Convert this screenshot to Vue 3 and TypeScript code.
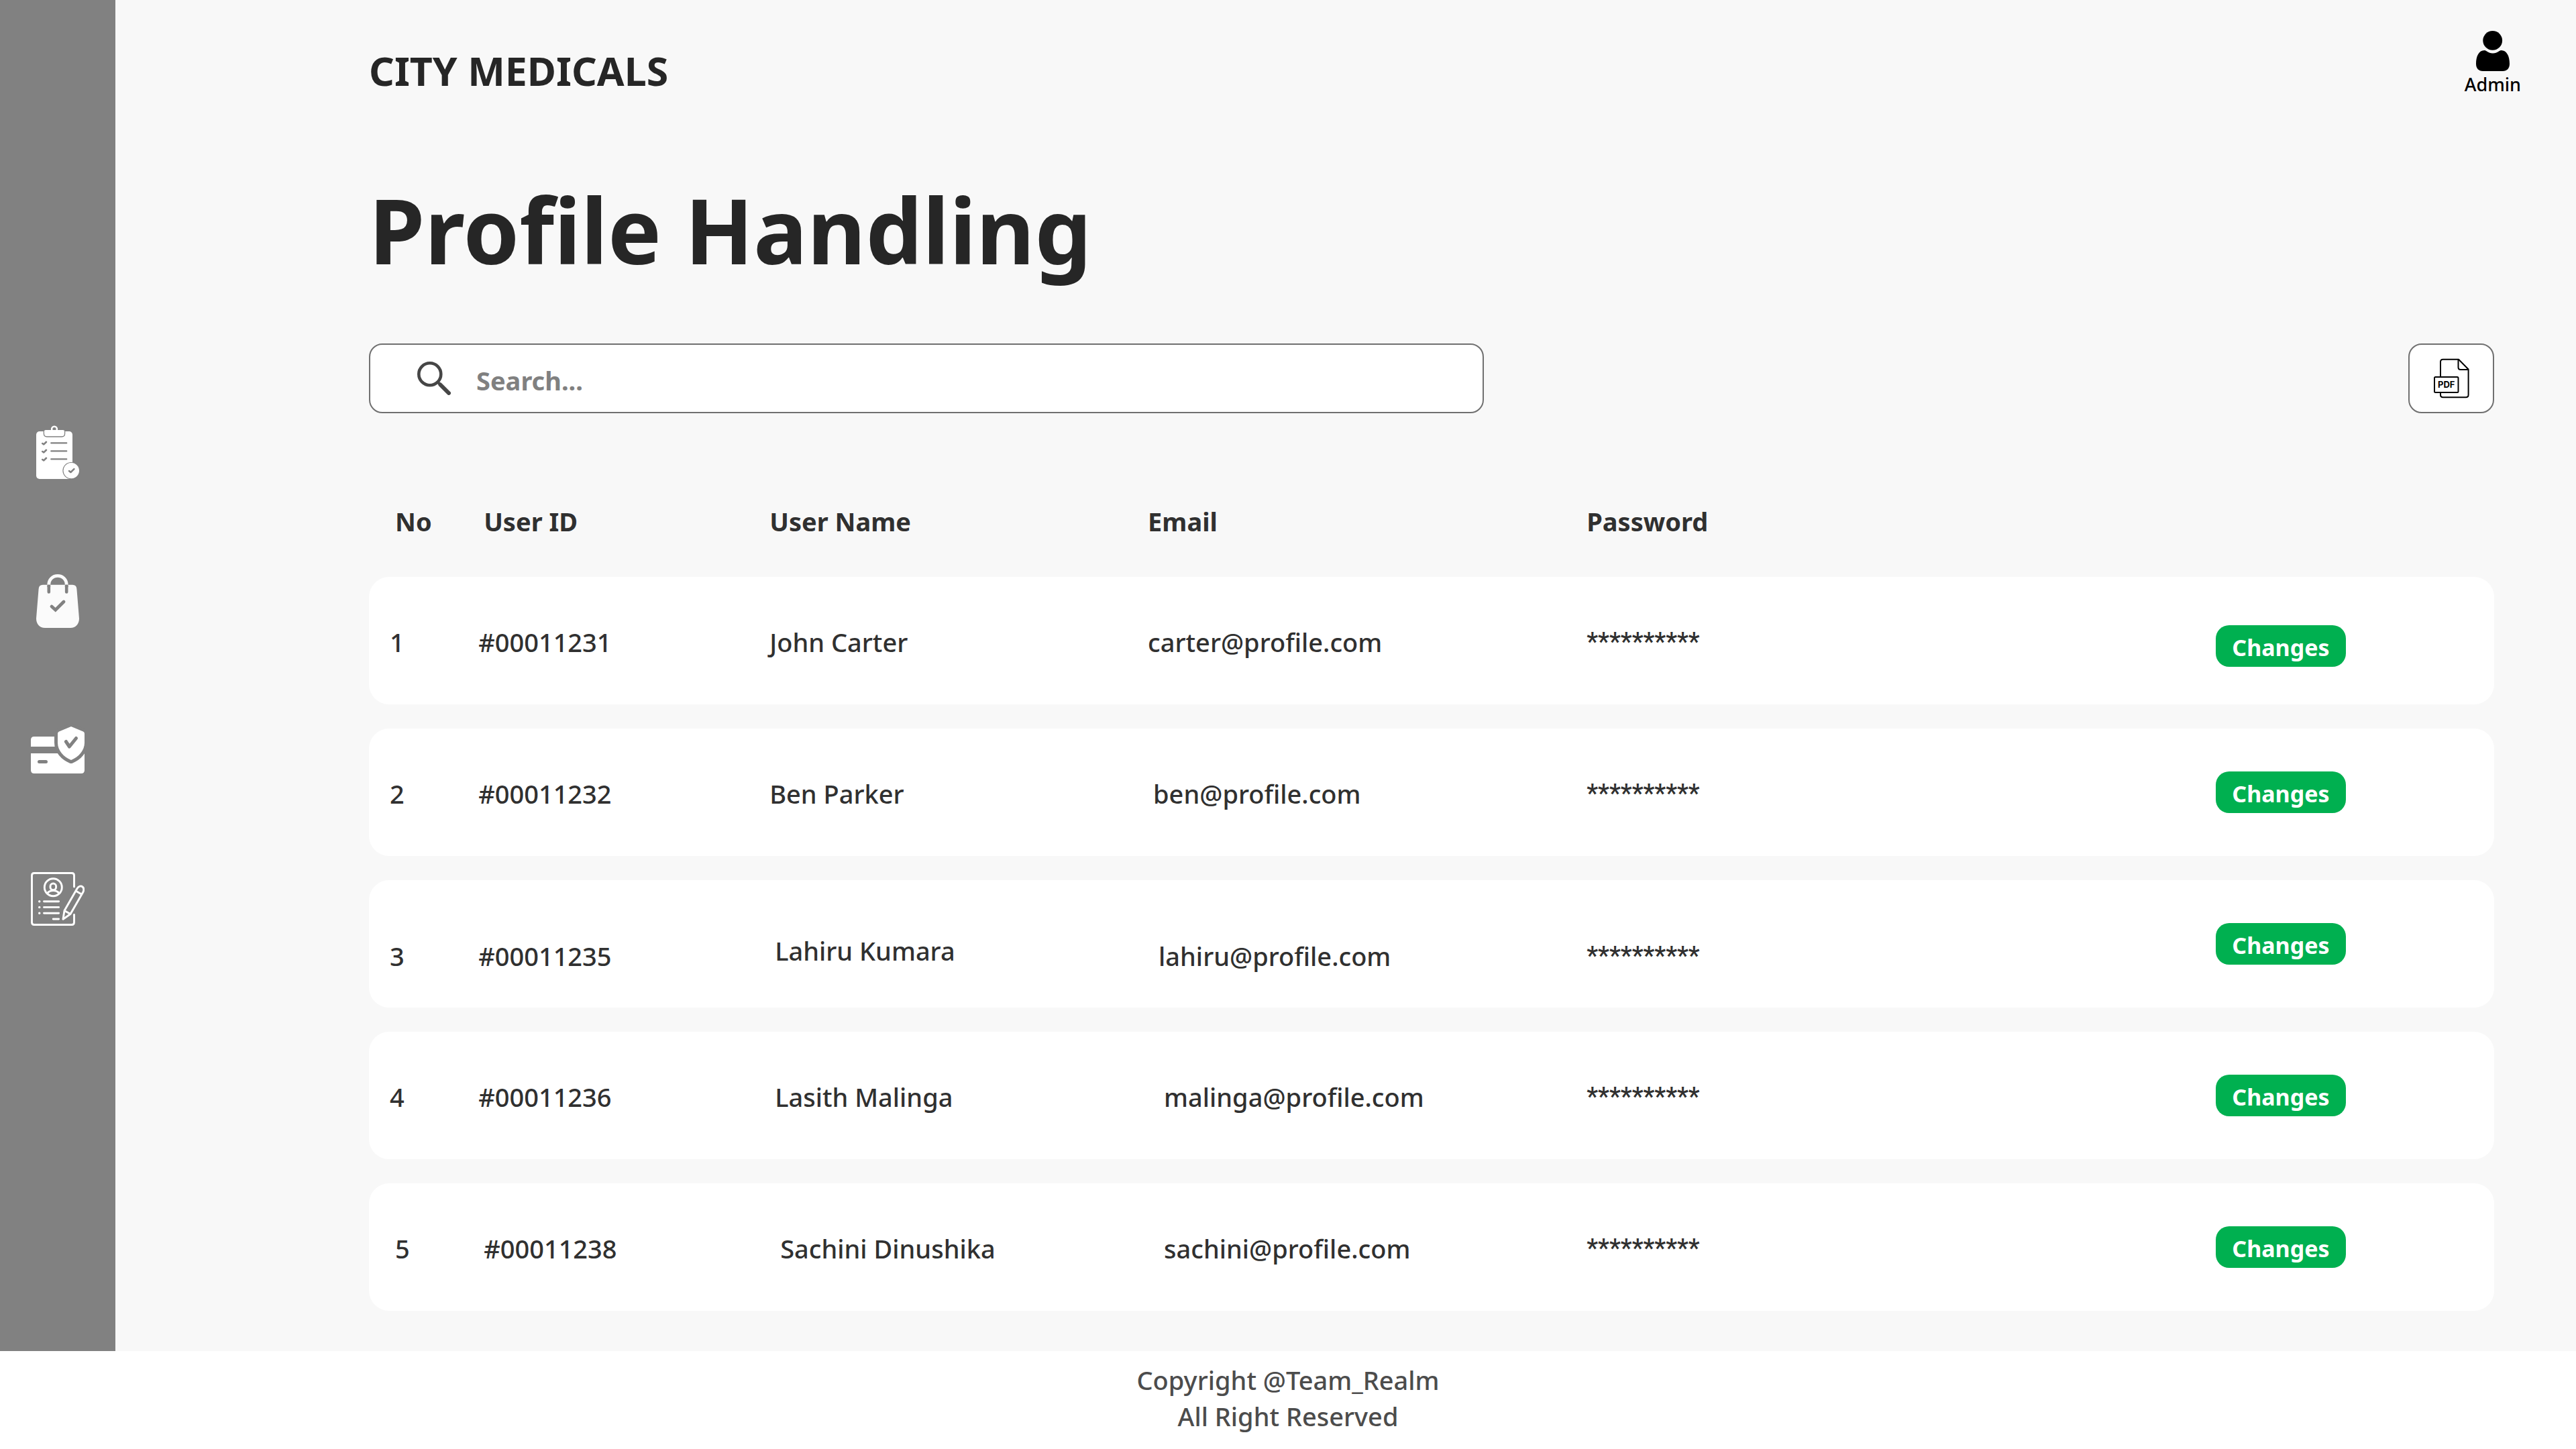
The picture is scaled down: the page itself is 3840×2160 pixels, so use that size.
<script setup lang="ts">
import { computed, ref } from 'vue'

interface Profile {
  no: number
  id: string
  name: string
  email: string
  row?: string
  numberClass?: string
  nameClass?: string
  emailClass?: string
}

const query = ref('')

const profiles: Profile[] = [
  { no: 1, id: '#00011231', name: 'John Carter', email: 'carter@profile.com', row: 'low-action' },
  { no: 2, id: '#00011232', name: 'Ben Parker', email: 'ben@profile.com', emailClass: 'indent-s' },
  { no: 3, id: '#00011235', name: 'Lahiru Kumara', email: 'lahiru@profile.com', row: 'low-text', nameClass: 'indent-s', emailClass: 'indent-m' },
  { no: 4, id: '#00011236', name: 'Lasith Malinga', email: 'malinga@profile.com', nameClass: 'indent-s', emailClass: 'indent-l' },
  { no: 5, id: '#00011238', name: 'Sachini Dinushika', email: 'sachini@profile.com', numberClass: 'indent-s', nameClass: 'indent-m', emailClass: 'indent-l' },
]

const visible = computed(() => {
  const q = query.value.trim().toLowerCase()
  return q ? profiles.filter((p) => `${p.id} ${p.name} ${p.email}`.toLowerCase().includes(q)) : profiles
})
</script>

<template>
  <div class="page">
    <nav class="sidebar" aria-label="Main">
      <a href="#orders" aria-label="Orders">
        <svg width="64" height="80" viewBox="0 0 64 80">
          <rect y="9" width="54" height="71" rx="5" fill="#fff" />
          <circle cx="27" cy="5.6" r="3.9" fill="none" stroke="#fff" stroke-width="2.6" />
          <path d="M11.4 8.5V12.5Q11.4 17 16 17H38Q42.6 17 42.6 12.5V8.5" fill="#fff" stroke="#818181" stroke-width="1.3" />
          <path d="M12 9Q12 7 14 7H40Q42 7 42 9V12H12Z" fill="#fff" />
          <g fill="none" stroke="#818181" stroke-linecap="round" stroke-linejoin="round" stroke-width="2.6">
            <path d="M9.2 27L11.3 28.4L15 24.8M9.2 39L11.3 40.4L15 36.8M9.2 51L11.3 52.4L15 48.8" />
            <path d="M22.3 26.4H45.2M22.3 38.4H45.2M22.3 50.4H45.2" stroke-width="2.3" />
          </g>
          <circle cx="52" cy="67.6" r="12" fill="#fff" stroke="#818181" stroke-width="1.3" />
          <circle cx="52.4" cy="67.6" r="11.6" fill="#fff" />
          <path d="M49 68L51.4 70L56.4 65.2" fill="none" stroke="#818181" stroke-width="2.5" stroke-linecap="round" stroke-linejoin="round" />
        </svg>
      </a>
      <a href="#shop" aria-label="Shop">
        <svg width="64" height="80" viewBox="0 0 64 80">
          <path d="M10 15.7H54Q60 15.7 60.4 22L64 66C64 74 59 80 51 80H13C5 80 0 74 0 66L3.6 22Q4 15.7 10 15.7Z" fill="#fbfbfb" />
          <path d="M18.8 15.7C18.8 8 24.5 2.4 32 2.4S45.2 8 45.2 15.7" fill="none" stroke="#fbfbfb" stroke-width="4.8" />
          <g fill="none" stroke="#818181" stroke-linecap="round">
            <path d="M18.8 18V26.4M45.2 18V26.4" stroke-width="4.6" />
            <path d="M23 48L28.7 53.2L41 41" stroke-width="4.8" />
          </g>
          <path d="M16.4 15.7H21.2V19H16.4ZM42.8 15.7H47.6V19H42.8Z" fill="#818181" />
        </svg>
      </a>
      <a href="#payments" aria-label="Payments">
        <svg width="80" height="80" viewBox="0 -5 80 80">
          <path d="M5 15H37V30H0V20Q0 15 5 15Z" fill="#fff" />
          <path d="M0 40H80V65Q80 70 75 70H5Q0 70 0 65Z" fill="#fff" />
          <path d="M12.5 52.5H22.5" stroke="#818181" stroke-width="5" stroke-linecap="round" />
          <path d="M60 0L78 7.4Q80 8.4 80 10.4V24C80 36 71 45.5 60 50C49 45.5 40 36 40 24V10.4Q40 8.4 42 7.4Z" fill="#fff" stroke="#818181" stroke-width="10" stroke-linejoin="round" paint-order="stroke" />
          <path d="M52.4 22.5L57.4 30L67.5 17.5" fill="none" stroke="#818181" stroke-width="5" stroke-linecap="round" stroke-linejoin="round" />
        </svg>
      </a>
      <a href="#profiles" aria-label="Profiles">
        <svg width="80" height="80" viewBox="0 0 80 80" fill="none" stroke="#fff" stroke-width="2.9" stroke-linecap="round" stroke-linejoin="round">
          <path d="M64.5 22V5Q64.5 1.5 61 1.5H5Q1.5 1.5 1.5 5V75Q1.5 78.5 5 78.5H61Q64.5 78.5 64.5 75V63.5" />
          <circle cx="33.3" cy="22.7" r="13" />
          <rect x="29" y="17" width="8.6" height="9.6" rx="4.2" />
          <path d="M24.5 31.5C27 28.5 30 27.5 33.3 27.5S39.6 28.5 42.1 31.5" />
          <path d="M19.5 43.7H41.6M19.5 52.4H41.6M19.5 61.3H41.6M33.2 70H41.6" />
          <path d="M12.7 43.7H12.8M12.7 52.4H12.8M12.7 61.3H12.8" stroke-width="3.4" />
          <path d="M50 57.5L69 24.5C71 21 75 20 77 22C79.5 24 79 27 78 29.5L59 62.5L48 70.2ZM50 57.5L59 62.5M67.3 28.3L75.5 33" />
        </svg>
      </a>
    </nav>

    <main class="content">
      <header class="topbar">
        <p class="brand">CITY MEDICALS</p>
        <a class="account" href="#account">
          <svg width="50" height="60" viewBox="0 0 50 60" aria-hidden="true">
            <circle cx="24.7" cy="14.4" r="14.4" />
            <path d="M12.5 29C16 29 17.5 33.5 25 33.5S34 29 37.5 29C46 29 50 38 50 49C50 56 46 60 40 60H10C4 60 0 56 0 49C0 38 4 29 12.5 29Z" />
          </svg>
          <span>Admin</span>
        </a>
      </header>

      <section class="body">
        <h1>Profile Handling</h1>

        <div class="tools">
          <label class="search">
            <svg width="50" height="50" viewBox="0 0 50 50" fill="none" stroke="#464646" stroke-linecap="round" aria-hidden="true">
              <circle cx="18.8" cy="18.8" r="16.5" stroke-width="4.6" />
              <path d="M30.5 30.5L35 35" stroke-width="4" />
              <path d="M34.5 34.5L47 47" stroke-width="6" />
            </svg>
            <input v-model="query" type="text" placeholder="Search..." aria-label="Search profiles" />
          </label>
          <button class="pdf" type="button" aria-label="Export as PDF">
            <svg width="55" height="60" viewBox="0 0 55 60" fill="none" stroke="#000" stroke-width="2" stroke-linejoin="round">
              <path d="M11 28V5.5Q11 1.8 14.7 1.8H38L52.6 16.5V54.5Q52.6 58.2 48.9 58.2H14.7Q11 58.2 11 54.5V51" />
              <path d="M37.5 1.8V13.5Q37.5 17 41 17H52.6" />
              <rect x="2" y="28" width="35.5" height="23" rx="1.5" />
              <text x="19.7" y="44.2" text-anchor="middle" class="pdf-text">PDF</text>
            </svg>
          </button>
        </div>

        <table class="profiles">
          <colgroup>
            <col class="c-no" /><col class="c-id" /><col class="c-name" />
            <col class="c-email" /><col class="c-password" /><col class="c-action" />
          </colgroup>
          <thead>
            <tr>
              <th scope="col" class="indent-s">No</th>
              <th scope="col" class="indent-s">User ID</th>
              <th scope="col">User Name</th>
              <th scope="col">Email</th>
              <th scope="col">Password</th>
              <td></td>
            </tr>
          </thead>
          <tbody>
            <tr v-for="p in visible" :key="p.id" :class="p.row">
              <td :class="p.numberClass">{{ p.no }}</td>
              <td :class="p.numberClass">{{ p.id }}</td>
              <td class="name" :class="p.nameClass">{{ p.name }}</td>
              <td :class="p.emailClass">{{ p.email }}</td>
              <td class="password">**********</td>
              <td class="action"><button type="button">Changes</button></td>
            </tr>
          </tbody>
        </table>
      </section>
    </main>

    <footer class="footer">
      <p>Copyright @Team_Realm</p>
      <p>All Right Reserved</p>
    </footer>
  </div>
</template>

<style>
body {
  margin: 0;
  background: #fff;
}
</style>

<style scoped>
.page {
  display: grid;
  grid-template-columns: 172px 1fr;
  grid-template-rows: 1fr auto;
  min-height: 100vh;
  font-family: "Noto Sans", "Open Sans", sans-serif;
  font-size: 38px;
  font-weight: 500;
  line-height: 54px;
  color: #303030;
}

.page * {
  box-sizing: border-box;
}

.sidebar {
  display: flex;
  flex-direction: column;
  align-items: center;
  gap: 142px;
  padding-top: 634px;
  background: #818181;
}

.sidebar svg,
.account svg,
.search svg,
.pdf svg {
  display: block;
}

.content {
  background: #f8f8f8;
  padding-left: 378px;
}

.topbar {
  display: flex;
  align-items: flex-end;
  justify-content: space-between;
  padding: 46px 82px 0 0;
}

.brand {
  margin: 0;
  font-size: 59px;
  font-weight: 700;
  line-height: 78px;
  color: #262626;
}

.account {
  display: flex;
  flex-direction: column;
  align-items: center;
  gap: 2px;
  font-size: 27px;
  line-height: 36px;
  color: #000;
  text-decoration: none;
}

.body {
  padding: 108px 122px 24px 0;
}

h1 {
  margin: 0;
  font-size: 134px;
  font-weight: 700;
  line-height: 180px;
  color: #262626;
}

.tools {
  display: flex;
  justify-content: space-between;
  height: 104px;
  margin-top: 80px;
}

.search {
  display: flex;
  align-items: center;
  gap: 38px;
  width: 52.45%;
  padding: 0 36px 0 70px;
  background: #fff;
  border: 2px solid #707070;
  border-radius: 20px;
}

.search input {
  flex: 1;
  min-width: 0;
  height: 100%;
  padding: 6px 0 0;
  border: 0;
  outline: 0;
  background: transparent;
  font: inherit;
  font-weight: 700;
  color: #303030;
}

.search input::placeholder {
  color: #808080;
  opacity: 1;
}

.pdf {
  display: flex;
  align-items: center;
  justify-content: center;
  width: 128px;
  padding: 0;
  background: #fff;
  border: 2px solid #707070;
  border-radius: 20px;
}

.pdf-text {
  font: 700 13px Inter, sans-serif;
  fill: #000;
  stroke: none;
}

.profiles {
  width: 100%;
  margin-top: 98px;
  table-layout: fixed;
  border-collapse: separate;
  border-spacing: 0 36px;
  text-align: left;
  --indent: 0px;
  --drop: 0px;
}

.c-no { width: 5.15%; }
.c-id { width: 13.7%; }
.c-name { width: 17.8%; }
.c-email { width: 20.65%; }
.c-password { width: 29.6%; }

th {
  padding: 0 0 20px var(--indent);
  font-weight: 700;
}

tbody td {
  height: 190px;
  padding: calc(70px + var(--drop)) 0 0 var(--indent);
  vertical-align: top;
  background: #fff;
}

th:first-child,
tbody td:first-child {
  padding-left: calc(31px + var(--indent));
}

tbody td:first-child {
  border-radius: 30px 0 0 30px;
}

tbody td:last-child {
  border-radius: 0 30px 30px 0;
}

.indent-s { --indent: 8px; }
.indent-m { --indent: 16px; }
.indent-l { --indent: 24px; }

.low-text td { --drop: 16px; }
.low-text .name { --drop: 8px; }
.low-text .action { --drop: 0px; }
.low-action .action { --drop: 8px; }

.password {
  font-family: Roboto, sans-serif;
}

tbody .action {
  padding-top: calc(64px + var(--drop));
}

.action button {
  display: block;
  width: 194px;
  height: 62px;
  padding: 4px 0 0;
  border: 0;
  border-radius: 20px;
  background: #00b050;
  color: #fff;
  font: inherit;
  font-size: 34px;
  font-weight: 700;
}

.footer {
  grid-column: 1 / -1;
  padding: 16px 0 22px;
  background: #fff;
  color: #4c4c4c;
  text-align: center;
}

.footer p {
  margin: 0;
}
</style>
